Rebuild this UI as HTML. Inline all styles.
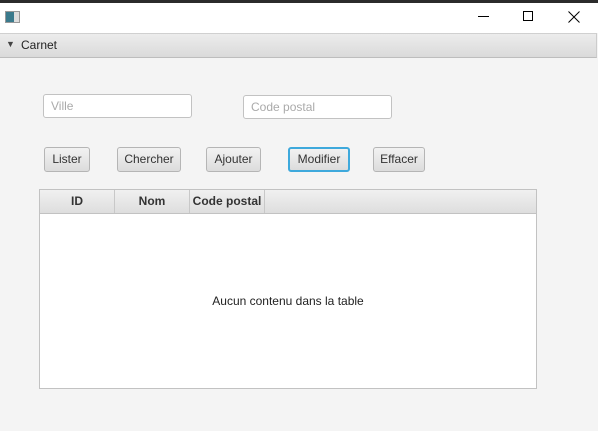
<!DOCTYPE html><html><head><style>
body{margin:0;width:598px;height:431px;background:#f4f4f4;font-family:"Liberation Sans",sans-serif;font-size:12px;position:relative;overflow:hidden;color:#222}
.a{position:absolute;box-sizing:border-box}
.tf{background:#fff;border:1px solid #c2c2c2;border-radius:3px;color:#aaa;padding:4px 7px;height:24px}
.btn{border:1px solid #b5b5b5;border-radius:3px;background:linear-gradient(#f2f2f2,#dcdcdc);height:25px;text-align:center;line-height:23px;color:#333}
.th{top:1px;height:23px;border-right:1px solid #c8c8c8;text-align:center;line-height:23px;font-weight:bold;color:#333}
</style></head><body>
<div class="a" style="left:0;top:0;width:598px;height:3px;background:#2b2b2b"></div>
<div class="a" style="left:0;top:3px;width:598px;height:30px;background:#fff"></div>
<div class="a" style="left:5px;top:11px;width:15px;height:12px;border:1px solid #999;background:linear-gradient(90deg,#3a7a8c 60%,#ddd 60%)"></div>
<div class="a" style="left:478px;top:16px;width:11px;height:1px;background:#000"></div>
<div class="a" style="left:523px;top:11px;width:10px;height:10px;border:1px solid #000"></div>
<svg class="a" style="left:568px;top:11px" width="12" height="12"><path d="M0.5 0.5L11.5 11.5M11.5 0.5L0.5 11.5" stroke="#000" stroke-width="1"/></svg>
<div class="a" style="left:0;top:33px;width:597px;height:25px;background:linear-gradient(#ececec,#dadada);border-top:1px solid #d0d0d0;border-bottom:1px solid #bdbdbd;border-right:1px solid #ccc"></div>
<div class="a" style="left:6px;top:39px;font-size:9px;color:#444">▼</div>
<div class="a" style="left:21px;top:38px;font-size:12px;color:#222">Carnet</div>
<div class="a tf" style="left:43px;top:94px;width:149px">Ville</div>
<div class="a tf" style="left:243px;top:95px;width:149px">Code postal</div>
<div class="a btn" style="left:44px;top:147px;width:46px">Lister</div>
<div class="a btn" style="left:117px;top:147px;width:64px">Chercher</div>
<div class="a btn" style="left:206px;top:147px;width:55px">Ajouter</div>
<div class="a btn" style="left:288px;top:147px;width:62px;border:2px solid #3ea9dc;line-height:21px">Modifier</div>
<div class="a btn" style="left:373px;top:147px;width:52px">Effacer</div>
<div class="a" style="left:39px;top:189px;width:498px;height:200px;background:#fff;border:1px solid #c2c2c2">
<div class="a" style="left:0;top:0;width:496px;height:24px;background:linear-gradient(#f0f0f0,#dedede);border-bottom:1px solid #c2c2c2"></div>
<div class="a th" style="left:0;top:0;width:75px">ID</div>
<div class="a th" style="left:75px;top:0;width:75px">Nom</div>
<div class="a th" style="left:150px;top:0;width:75px">Code postal</div>
<div class="a" style="left:0;top:104px;width:496px;text-align:center">Aucun contenu dans la table</div>
</div>
</body></html>
